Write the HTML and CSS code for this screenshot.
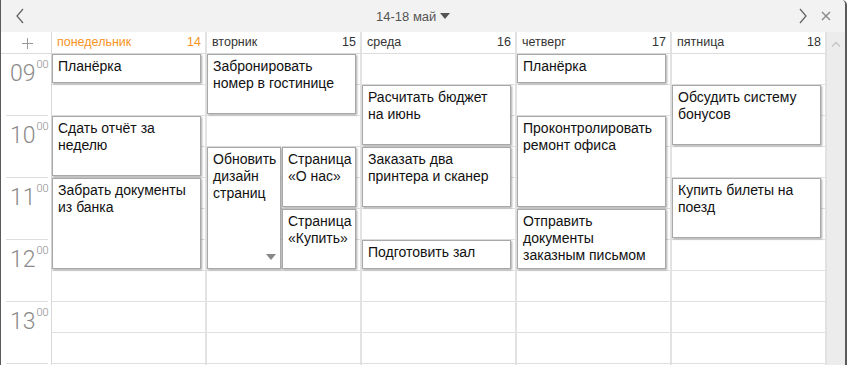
FILE: index.html
```html
<!DOCTYPE html>
<html lang="ru">
<head>
    <meta charset="UTF-8">
    <title>Календарь</title>
    <link rel="stylesheet" href="styles.css">
</head>
<body>
    <div class="window">
        <div class="toolbar">
            <div class="tb-left">
                <svg class="chev" width="10" height="16" viewBox="0 0 10 16"><polyline points="8,1 2,8 8,15" /></svg>
            </div>
            <div class="title">14-18 май <span class="caret"></span></div>
            <div class="tb-right">
                <svg class="chev" width="10" height="16" viewBox="0 0 10 16"><polyline points="2,1 8,8 2,15" /></svg>
                <svg class="close" width="10" height="10" viewBox="0 0 10 10"><path d="M1 1 L9 9 M9 1 L1 9" /></svg>
            </div>
        </div>

        <div class="calendar">
            <!-- header row -->
            <div class="corner">
                <svg width="11" height="11" viewBox="0 0 11 11"><path d="M5.5 0 V11 M0 5.5 H11" /></svg>
            </div>
            <div class="day-head today"><span>понедельник</span><span>14</span></div>
            <div class="day-head"><span>вторник</span><span>15</span></div>
            <div class="day-head"><span>среда</span><span>16</span></div>
            <div class="day-head"><span>четверг</span><span>17</span></div>
            <div class="day-head"><span>пятница</span><span>18</span></div>
            <div class="scrollbar">
                <svg width="10" height="6" viewBox="0 0 10 6"><polyline points="1,5.5 5,1.5 9,5.5" /></svg>
            </div>

            <!-- time column -->
            <div class="times">
                <div class="hour">09<sup>00</sup></div>
                <div class="hour">10<sup>00</sup></div>
                <div class="hour">11<sup>00</sup></div>
                <div class="hour">12<sup>00</sup></div>
                <div class="hour">13<sup>00</sup></div>
            </div>

            <!-- понедельник -->
            <div class="day">
                <div class="event" style="grid-row: 1 / 2">Планёрка</div>
                <div class="event" style="grid-row: 3 / 5">Сдать отчёт за неделю</div>
                <div class="event" style="grid-row: 5 / 8">Забрать документы из банка</div>
            </div>

            <!-- вторник -->
            <div class="day split">
                <div class="event" style="grid-row: 1 / 3; grid-column: 1 / 3">Забронировать номер в гостинице</div>
                <div class="event narrow more" style="grid-row: 4 / 8; grid-column: 1">Обновить дизайн страниц</div>
                <div class="event" style="grid-row: 4 / 6; grid-column: 2">Страница «О нас»</div>
                <div class="event" style="grid-row: 6 / 8; grid-column: 2">Страница «Купить»</div>
            </div>

            <!-- среда -->
            <div class="day">
                <div class="event" style="grid-row: 2 / 4">Расчитать бюджет на июнь</div>
                <div class="event" style="grid-row: 4 / 6">Заказать два принтера и сканер</div>
                <div class="event" style="grid-row: 7 / 8">Подготовить зал</div>
            </div>

            <!-- четверг -->
            <div class="day">
                <div class="event" style="grid-row: 1 / 2">Планёрка</div>
                <div class="event" style="grid-row: 3 / 6">Проконтролировать ремонт офиса</div>
                <div class="event" style="grid-row: 6 / 8">Отправить документы заказным письмом</div>
            </div>

            <!-- пятница -->
            <div class="day">
                <div class="event" style="grid-row: 2 / 4">Обсудить систему бонусов</div>
                <div class="event" style="grid-row: 5 / 7">Купить билеты на поезд</div>
            </div>
        </div>
    </div>
</body>
</html>
```

FILE: styles.css
```css
body {
    margin: 0;
    font-family: "Liberation Sans", Arial, sans-serif;
    background: #ffffff;
}

/* === Window === */
.window {
    width: 847px;
    height: 365px;
    box-sizing: border-box;
    border-left: 1px solid #5a5a5a;
    border-right: 2px solid #5a5a5a;
    border-top-right-radius: 5px;
    overflow: hidden;
    background: #f2f2f2;
}

.toolbar {
    height: 32px;
    display: flex;
    align-items: center;
    background: #f2f2f2;
}

.tb-left {
    width: 40px;
    padding-left: 14px;
    box-sizing: border-box;
    display: flex;
}

.tb-right {
    width: 60px;
    padding-right: 14px;
    box-sizing: border-box;
    display: flex;
    justify-content: flex-end;
    align-items: center;
    gap: 13px;
}

.chev polyline {
    fill: none;
    stroke: #666;
    stroke-width: 1.3;
}

.close path {
    stroke: #888;
    stroke-width: 1.4;
}

.title {
    flex: 1;
    text-align: center;
    font-size: 13px;
    color: #555;
}

.caret {
    display: inline-block;
    width: 0;
    height: 0;
    border-left: 5px solid transparent;
    border-right: 5px solid transparent;
    border-top: 6px solid #555;
    vertical-align: 2px;
}

/* === Calendar grid === */
.calendar {
    display: grid;
    grid-template-columns: 51px repeat(5, 155px) 18px;
    grid-template-rows: 22px 311px;
    background: #ffffff;
}

.corner {
    border-right: 1px solid #d8d8d8;
    border-bottom: 1px solid #dcdcdc;
    display: flex;
    justify-content: center;
    padding-top: 6px;
    padding-left: 2px;
    box-sizing: border-box;
}

.corner path {
    stroke: #999;
    stroke-width: 1;
}

.day-head {
    display: flex;
    justify-content: space-between;
    align-items: flex-end;
    padding: 0 4px 4px 5px;
    font-size: 12.5px;
    color: #333;
    border-right: 2px solid #e2e2e2;
    border-bottom: 1px solid #dcdcdc;
}

.day-head.today {
    color: #f7941d;
}

.scrollbar {
    grid-row: 1 / 3;
    grid-column: 7;
    background: #ececec;
    display: flex;
    justify-content: center;
    padding-top: 9px;
    box-sizing: border-box;
}

.scrollbar polyline {
    fill: none;
    stroke: #c4c4c4;
    stroke-width: 1.3;
}

/* === Time column === */
.times {
    border-right: 1px solid #d8d8d8;
}

.hour {
    margin: 0 3px 0 5px;
    border-bottom: 1px solid #dedede;
    padding: 8px 0 0 4px;
    height: 53px;
    font-family: Roboto, "Liberation Sans", sans-serif;
    font-weight: 300;
    font-size: 23px;
    line-height: 1;
    color: #8a8a8a;
}

.hour sup {
    font-size: 11px;
    vertical-align: top;
    position: relative;
    top: -3px;
    margin-left: 1px;
}

/* === Day columns === */
.day {
    display: grid;
    grid-template-rows: repeat(10, 31px);
    grid-template-columns: 1fr;
    border-right: 2px solid #e2e2e2;
    background: repeating-linear-gradient(to bottom, #ffffff 0, #ffffff 30px, #e0e0e0 30px, #e0e0e0 31px);
}

.day.split {
    grid-template-columns: 75px 1fr;
}

.event {
    position: relative;
    margin: 0 4px 2px 0;
    padding: 3px 8px 3px 5px;
    background: #ffffff;
    border: 1px solid #a8a8a8;
    box-shadow: 1px 1px 2px rgba(0, 0, 0, 0.35);
    font-size: 14px;
    line-height: 17px;
    color: #111;
    overflow: hidden;
}

.event.narrow {
    margin-right: 1px;
    padding-right: 2px;
}

.event.more::after {
    content: "";
    position: absolute;
    right: 4px;
    bottom: 8px;
    border-left: 5px solid transparent;
    border-right: 5px solid transparent;
    border-top: 6px solid #888;
}
```
